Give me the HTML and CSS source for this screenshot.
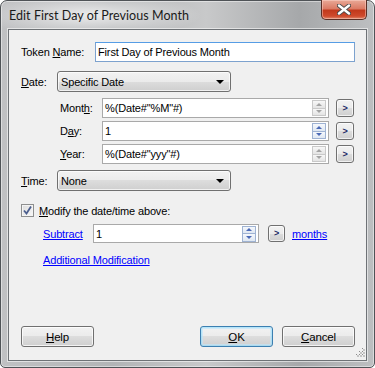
FILE: index.html
```html
<!DOCTYPE html>
<html lang="en">
<head>
	<meta charset="UTF-8">
	<title>Edit First Day of Previous Month</title>
	<link rel="stylesheet" href="styles.css">
</head>
<body>
	<div class="window">
		<div class="titlebar">
			<span class="title">Edit First Day of Previous Month</span>
			<div class="close">
				<svg width="14" height="11" viewBox="0 0 14 11">
					<path d="M2 1.5 L12 9.5 M12 1.5 L2 9.5" stroke="#4a4a4a" stroke-width="4.2" stroke-linecap="round"/>
					<path d="M2 1.5 L12 9.5 M12 1.5 L2 9.5" stroke="#ffffff" stroke-width="2.4" stroke-linecap="round"/>
				</svg>
			</div>
		</div>

		<div class="client">
			<div class="row token-row">
				<label class="lbl lbl-token">Token <u>N</u>ame:</label>
				<div class="textbox focused"><span class="val">First Day of Previous Month</span></div>
			</div>

			<div class="row date-row">
				<label class="lbl lbl-date"><u>D</u>ate:</label>
				<div class="combo"><span class="val">Specific Date</span><span class="arrow"></span></div>
			</div>

			<div class="row part-row">
				<label class="lbl lbl-part">Mont<u>h</u>:</label>
				<div class="textbox part-box">
					<span class="val">%(Date#"%M"#)</span>
					<span class="spin"><i class="up"></i><i class="down"></i></span>
				</div>
				<div class="mini">&gt;</div>
			</div>
			<div class="row part-row">
				<label class="lbl lbl-part">D<u>a</u>y:</label>
				<div class="textbox part-box">
					<span class="val">1</span>
					<span class="spin hot"><i class="up"></i><i class="down"></i></span>
				</div>
				<div class="mini">&gt;</div>
			</div>
			<div class="row part-row">
				<label class="lbl lbl-part"><u>Y</u>ear:</label>
				<div class="textbox part-box">
					<span class="val">%(Date#"yyy"#)</span>
					<span class="spin"><i class="up"></i><i class="down"></i></span>
				</div>
				<div class="mini">&gt;</div>
			</div>

			<div class="row time-row">
				<label class="lbl lbl-date"><u>T</u>ime:</label>
				<div class="combo"><span class="val">None</span><span class="arrow"></span></div>
			</div>

			<div class="row check-row">
				<span class="checkbox">
					<svg width="9" height="9" viewBox="0 0 9 9">
						<path d="M1 4.5 L3.5 7.5 L8 0.5" fill="none" stroke="#4b5e8e" stroke-width="1.8"/>
					</svg>
				</span>
				<label class="check-lbl"><u>M</u>odify the date/time above:</label>
			</div>

			<div class="row mod-row">
				<a class="link link-op">Subtract</a>
				<div class="textbox mod-box">
					<span class="val">1</span>
					<span class="spin hot"><i class="up"></i><i class="down"></i></span>
				</div>
				<div class="mini">&gt;</div>
				<a class="link link-unit">months</a>
			</div>

			<div class="row extra-row">
				<a class="link">Additional Modification</a>
			</div>

			<div class="buttons">
				<div class="btn"><u>H</u>elp</div>
				<div class="btn-group">
					<div class="btn default"><u>O</u>K</div>
					<div class="btn"><u>C</u>ancel</div>
				</div>
			</div>

			<svg class="grip" width="11" height="11" viewBox="0 0 11 11">
				<g fill="#c4c4c4">
					<rect x="9" y="1" width="2" height="2"/>
					<rect x="6" y="4" width="2" height="2"/><rect x="9" y="4" width="2" height="2"/>
					<rect x="3" y="7" width="2" height="2"/><rect x="6" y="7" width="2" height="2"/><rect x="9" y="7" width="2" height="2"/>
				</g>
				<g fill="#8d8d8d">
					<rect x="8" y="0" width="1" height="1"/>
					<rect x="5" y="3" width="1" height="1"/><rect x="8" y="3" width="1" height="1"/>
					<rect x="2" y="6" width="1" height="1"/><rect x="5" y="6" width="1" height="1"/><rect x="8" y="6" width="1" height="1"/>
				</g>
			</svg>
		</div>
	</div>
</body>
</html>
```

FILE: styles.css
```css
* {
	box-sizing: border-box;
}

body {
	margin: 0;
	background: #ffffff;
	font-family: "Liberation Sans", Arial, sans-serif;
	font-size: 11px;
	letter-spacing: -0.15px;
	color: #000000;
}

u {
	text-decoration: underline;
	text-underline-offset: 1px;
}

/* window frame */

.window {
	width: 375px;
	height: 368px;
	padding: 0 7px 6px 7px;
	border: 1px solid #4f5357;
	border-radius: 7px 7px 5px 5px;
	background:
		radial-gradient(ellipse 110px 22px at 90px 14px, rgba(255, 255, 255, 0.75), rgba(255, 255, 255, 0) 100%),
		linear-gradient(to right, #c0c1c3 0%, #b2b4b6 30%, #c8c9ca 55%, #a6a8aa 80%, #bdbfc1 100%);
	box-shadow: inset 0 0 0 1px rgba(255, 255, 255, 0.45);
	display: flex;
	flex-direction: column;
}

.titlebar {
	height: 28px;
	display: flex;
	justify-content: space-between;
	align-items: flex-start;
}

.title {
	font-family: Lato, "Open Sans", sans-serif;
	font-size: 12.5px;
	letter-spacing: 0.05px;
	color: #1a1a1a;
	margin-top: 7px;
	margin-left: 1px;
}

.close {
	width: 46px;
	height: 20px;
	margin-top: -1px;
	border: 1px solid #5a2f26;
	border-top: none;
	border-radius: 0 0 5px 5px;
	background: linear-gradient(to bottom, #e9a997 0%, #db7b65 45%, #c2391c 55%, #cf4a2c 85%, #e08a6e 100%);
	box-shadow: inset 0 0 0 1px rgba(255, 220, 210, 0.45);
	display: flex;
	align-items: center;
	justify-content: center;
}

.client {
	flex: 1;
	position: relative;
	background: #f0f0f0;
	border: 1px solid #6e7276;
	box-shadow: 0 0 0 1px rgba(255, 255, 255, 0.55);
	padding: 12px 11px 13px 12px;
	display: flex;
	flex-direction: column;
}

/* rows */

.row {
	display: flex;
	align-items: center;
}

.token-row {
	height: 20px;
}

.date-row {
	height: 21px;
	margin-top: 9px;
}

.part-row {
	height: 20px;
	margin-top: 3px;
	padding-left: 39px;
}

.date-row + .part-row {
	margin-top: 6px;
}

.time-row {
	height: 21px;
	margin-top: 6px;
}

.check-row {
	height: 13px;
	margin-top: 13px;
}

.mod-row {
	height: 19px;
	margin-top: 7px;
	padding-left: 22px;
}

.extra-row {
	height: 13px;
	margin-top: 10px;
	padding-left: 22px;
}

.lbl-token {
	width: 74px;
}

.lbl-date {
	width: 36px;
}

.lbl-part {
	width: 42px;
}

/* controls */

.textbox {
	height: 100%;
	background: #ffffff;
	border: 1px solid #abadb3;
	border-color: #abadb3 #dbdfe6 #e3e9ef #e2e3ea;
	display: flex;
	align-items: center;
	padding-left: 2px;
}

.part-box, .mod-box {
	border: 1px solid #a9a9a9;
	padding-right: 2px;
}

.textbox .val {
	flex: 1;
	white-space: nowrap;
}

.focused {
	flex: 1;
	border: 1px solid #7da2ce;
	border-top-color: #569de5;
}

.part-box {
	width: 227px;
}

.mod-box {
	width: 166px;
}

.spin {
	width: 14px;
	height: 16px;
	display: flex;
	flex-direction: column;
	border: 1px solid #c9c9c9;
	background: #f2f2f2;
}

.spin i {
	flex: 1;
	display: flex;
	align-items: center;
	justify-content: center;
	background: linear-gradient(to bottom, #f7f7f7, #e4e4e4);
}

.spin i + i {
	border-top: 1px solid #c9c9c9;
}

.spin i::after {
	content: "";
	border-left: 3px solid transparent;
	border-right: 3px solid transparent;
}

.spin .up::after {
	border-bottom: 3px solid #a3a3a3;
}

.spin .down::after {
	border-top: 3px solid #a3a3a3;
}

.spin.hot {
	border-color: #9fb3d3;
}

.spin.hot i {
	background: linear-gradient(to bottom, #f5f8fc, #dfe7f2);
}

.spin.hot i + i {
	border-top-color: #9fb3d3;
}

.spin.hot .up::after {
	border-bottom-color: #4a69b6;
}

.spin.hot .down::after {
	border-top-color: #4a69b6;
}

.combo {
	width: 174px;
	height: 100%;
	border: 1px solid #707070;
	border-radius: 3px;
	background: linear-gradient(to bottom, #f2f2f2 0%, #ebebeb 50%, #dddddd 50%, #cfcfcf 100%);
	box-shadow: inset 0 0 0 1px rgba(255, 255, 255, 0.7);
	display: flex;
	align-items: center;
	padding: 0 5px 0 3px;
}

.combo .val {
	flex: 1;
}

.combo .arrow {
	border-left: 4px solid transparent;
	border-right: 4px solid transparent;
	border-top: 4px solid #000000;
	margin-right: 1px;
}

.mini {
	width: 18px;
	height: 18px;
	margin-left: 7px;
	border: 1px solid #707070;
	border-radius: 3px;
	background: linear-gradient(to bottom, #f2f2f2 0%, #ebebeb 50%, #dddddd 50%, #cfcfcf 100%);
	box-shadow: inset 0 0 0 1px rgba(255, 255, 255, 0.7);
	font-size: 9px;
	font-weight: bold;
	color: #1c2a66;
	display: flex;
	align-items: center;
	justify-content: center;
	line-height: 1;
}

.mod-row .mini {
	width: 17px;
	height: 17px;
	margin-left: 9px;
}

.checkbox {
	width: 13px;
	height: 13px;
	border: 1px solid #8e8f8f;
	background: linear-gradient(135deg, #dcdcdc, #f8f8f8);
	box-shadow: inset 0 0 0 1px #f4f4f4;
	display: flex;
	align-items: center;
	justify-content: center;
}

.check-lbl {
	margin-left: 5px;
}

.link {
	color: #0000ff;
	text-decoration: underline;
	cursor: pointer;
}

.link-op {
	width: 50px;
}

.link-unit {
	margin-left: 7px;
}

/* bottom buttons */

.buttons {
	margin-top: auto;
	display: flex;
	justify-content: space-between;
}

.btn-group {
	display: flex;
	gap: 9px;
}

.btn {
	width: 73px;
	height: 21px;
	border: 1px solid #707070;
	border-radius: 3px;
	background: linear-gradient(to bottom, #f2f2f2 0%, #ebebeb 50%, #dddddd 50%, #cfcfcf 100%);
	box-shadow: inset 0 0 0 1px rgba(255, 255, 255, 0.75);
	display: flex;
	align-items: center;
	justify-content: center;
	font-size: 11.5px;
}

.btn.default {
	border-color: #3c7fb1;
	box-shadow: inset 0 0 0 1px #48d2fb33, inset 0 0 0 2px rgba(190, 230, 253, 0.6);
}

.grip {
	position: absolute;
	right: 1px;
	bottom: 1px;
}
```
